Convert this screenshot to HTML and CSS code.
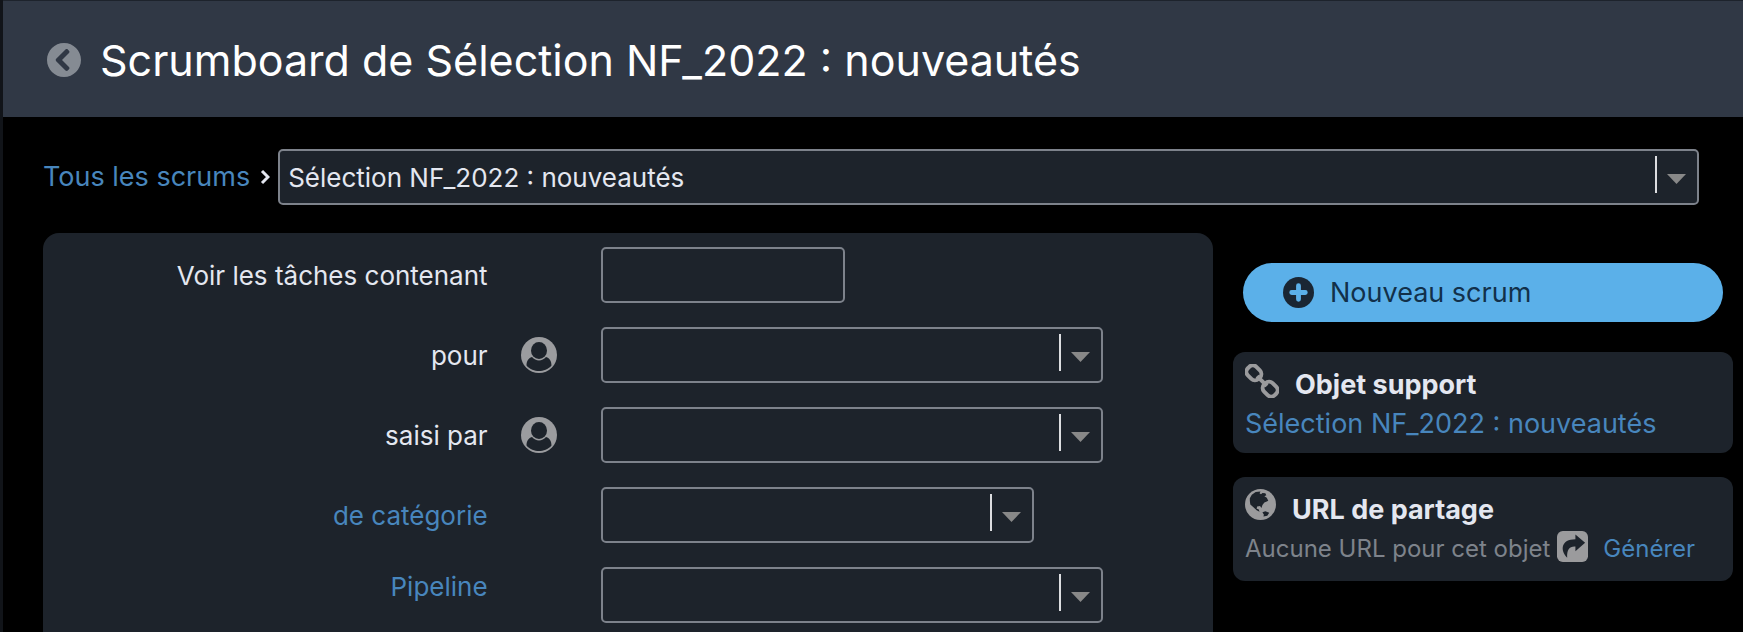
FILE: index.html
```html
<!DOCTYPE html>
<html lang="fr">
<head>
    <meta charset="UTF-8">
    <meta name="viewport" content="width=device-width, initial-scale=1.0">
    <title>Scrumboard de Sélection NF_2022 : nouveautés</title>
    <link rel="stylesheet" href="styles.css">
</head>
<body>
<header class="page-header">
    <a class="back" href="#" aria-label="Retour">
        <svg viewBox="8 8 496 496"><path d="M256 504C119 504 8 393 8 256S119 8 256 8s248 111 248 248-111 248-248 248zM142.1 273l135.5 135.5c9.4 9.4 24.6 9.4 33.9 0l17-17c9.4-9.4 9.4-24.6 0-33.9L226.9 256l101.6-101.6c9.4-9.4 9.4-24.6 0-33.9l-17-17c-9.4-9.4-24.6-9.4-33.9 0L142.1 239c-9.4 9.4-9.4 24.6 0 34z"/></svg>
    </a>
    <h1>Scrumboard de Sélection NF_2022 : nouveautés</h1>
</header>
<nav class="breadcrumb">
    <a href="#">Tous les scrums</a>
    <svg class="chevron" viewBox="0 0 10 16"><path d="M2 2l6 6-6 6"/></svg>
    <select class="field" aria-label="Scrum">
        <option>Sélection NF_2022 : nouveautés</option>
    </select>
</nav>
<div class="content">
    <form class="filters">
        <div class="row">
            <label for="contains">Voir les tâches contenant</label>
            <input class="field short" type="text" id="contains">
        </div>
        <div class="row">
            <label for="assignee">pour</label>
            <svg class="user" viewBox="0 0 36 36"><circle cx="18" cy="18" r="18"/><ellipse class="hole" cx="18" cy="13.5" rx="8" ry="8.5"/><path class="hole" d="M11 20c-4 1-5.500 5-5.500 8.500C9 32.500 13.500 34 18 34s9-1.500 12.500-5.500C30.500 25 29 21 25 20c-2 2.300-4.300 3.500-7 3.500S13 22.300 11 20z"/></svg>
            <select class="field" id="assignee"><option></option></select>
        </div>
        <div class="row">
            <label for="author">saisi par</label>
            <svg class="user" viewBox="0 0 36 36"><circle cx="18" cy="18" r="18"/><ellipse class="hole" cx="18" cy="13.5" rx="8" ry="8.5"/><path class="hole" d="M11 20c-4 1-5.500 5-5.500 8.500C9 32.500 13.500 34 18 34s9-1.500 12.500-5.500C30.500 25 29 21 25 20c-2 2.300-4.300 3.500-7 3.500S13 22.300 11 20z"/></svg>
            <select class="field" id="author"><option></option></select>
        </div>
        <div class="row">
            <label for="category"><a href="#">de catégorie</a></label>
            <select class="field medium" id="category"><option></option></select>
        </div>
        <div class="row top">
            <label for="pipeline"><a href="#">Pipeline</a></label>
            <select class="field" id="pipeline"><option></option></select>
        </div>
    </form>
    <aside class="sidebar">
        <button class="new-scrum" type="button">
            <svg viewBox="0 0 32 32"><circle cx="16" cy="16" r="16"/><path d="M16 9v14M9 16h14"/></svg>
            <span>Nouveau scrum</span>
        </button>
        <section class="card">
            <h2>
                <svg class="icon chain" viewBox="0 0 34 34"><g transform="rotate(45 17 17)"><rect x="-2" y="11" width="15" height="12" rx="5"/><rect x="21" y="11" width="15" height="12" rx="5"/><path d="M10 17h14"/></g></svg>
                Objet support
            </h2>
            <p><a href="#">Sélection NF_2022 : nouveautés</a></p>
        </section>
        <section class="card share">
            <h2>
                <svg class="icon" viewBox="0 0 32 32"><circle cx="16" cy="16" r="16"/><path class="hole" d="M5 9.500 7 6l4-3 5-.5-1 2 1.500 1 1.500-1.500 3 .5 1 2-2 1 2.500 1.500 1.500 3-1.500 1-2.500 1-2 2.500-1 3-1.500-2-3 .5-.5 2.500 2 .5 1 2.500-3-1.500-3-3-3.500-3L5 12.500z"/><path class="hole" d="M18 24l3-1 4 1.500-2 3-4 1 .5-2z"/></svg>
                URL de partage
            </h2>
            <p>Aucune URL pour cet objet <svg class="icon" viewBox="0 0 32 32"><rect width="32" height="32" rx="6"/><path class="hole" d="M19 3.500 29 12 19 21v-5c-6-.5-9 3-8.500 11.500C3 20 4 8.500 19 8.500z"/></svg> <a href="#">Générer</a></p>
        </section>
    </aside>
</div>
</body>
</html>
```
FILE: styles.css
```css
* {
    box-sizing: border-box;
}
body {
    margin: 0;
    min-height: 100vh;
    background: #000;
    color: #e4e7f0;
    border-left: 3px solid #111419;
    font-family: Inter, Roboto, sans-serif;
    font-size: 27px;
    line-height: 36px;
    overflow: hidden;
}
a {
    color: #4886bd;
    text-decoration: none;
}
h1, h2, p {
    margin: 0;
}
.page-header {
    display: flex;
    align-items: center;
    gap: 19px;
    height: 117px;
    padding: 2px 44px 0;
    background: #303845;
    border-top: 1px solid #1d232c;
}
.page-header h1 {
    color: #fff;
    font-size: 43px;
    font-weight: 400;
    line-height: 56px;
}
.back svg {
    display: block;
    width: 34px;
    height: 34px;
    fill: #858b93;
}
.breadcrumb {
    display: flex;
    align-items: center;
    padding: 32px 44px 28px 40px;
}
.chevron {
    width: 10px;
    height: 16px;
    margin: 0 8px 0 10px;
    fill: none;
    stroke: #e4e7f0;
    stroke-width: 3;
}
.field {
    width: 502px;
    height: 56px;
    padding: 2px 52px 0 8px;
    border: 2px solid #7d828b;
    border-radius: 5px;
    background: #1d232b;
    color: #e4e7f0;
    font: inherit;
    font-size: 26px;
}
select.field {
    appearance: none;
    background: #1d232b url("data:image/svg+xml,%3Csvg xmlns='http://www.w3.org/2000/svg' width='44' height='52'%3E%3Cpath fill='%23dcdde0' d='M2 5h2v37H2z'/%3E%3Cpath fill='%23888' d='M14 23h19l-9.500 10z'/%3E%3C/svg%3E") no-repeat right center;
}
.breadcrumb .field {
    flex: 1;
}
.content {
    display: grid;
    grid-template-columns: 1fr 500px;
    gap: 20px;
    padding: 0 10px 0 40px;
}
.filters {
    display: flex;
    flex-direction: column;
    gap: 24px;
    padding: 14px 0 24px;
    background: #1d232b;
    border-radius: 16px 16px 0 0;
}
.row {
    display: grid;
    grid-template-columns: 38% 113px 1fr;
    align-items: center;
}
.row label {
    padding-top: 2px;
    font-size: 26px;
    text-align: right;
}
.row.top label {
    align-self: start;
}
.row .field {
    grid-column: 3;
}
.row .short {
    width: 244px;
    padding-right: 8px;
}
.row .medium {
    width: 433px;
}
.user {
    width: 36px;
    height: 36px;
    margin-left: 33px;
    fill: #9b9c9f;
}
.hole {
    fill: #1d232b;
}
.sidebar {
    padding-top: 30px;
}
.new-scrum {
    display: flex;
    align-items: center;
    gap: 16px;
    width: 480px;
    height: 59px;
    margin: 0 10px 30px;
    padding: 0 40px;
    border: 0;
    border-radius: 30px;
    background: #5bb0e9;
    color: #12304a;
    font: inherit;
}
.new-scrum svg {
    width: 31px;
    height: 31px;
    fill: #1a2633;
    stroke: #5bb0e9;
    stroke-width: 5;
    stroke-linecap: round;
}
.new-scrum circle {
    stroke: none;
}
.card {
    margin-bottom: 24px;
    padding: 12px 12px 11px;
    background: #1d232b;
    border-radius: 12px;
    white-space: nowrap;
}
.card h2 {
    display: flex;
    gap: 16px;
    font-size: 27px;
    font-weight: 700;
    line-height: 42px;
}
.icon {
    width: 31px;
    height: 31px;
    fill: #9b9b9d;
}
.chain {
    width: 34px;
    height: 34px;
    fill: none;
    stroke: #9b9b9d;
    stroke-width: 4;
}
.share {
    padding-bottom: 14px;
}
.share p {
    display: flex;
    gap: 7px;
    color: #7e838b;
    font-size: 24px;
}
.share a {
    margin-left: 8px;
}
```
